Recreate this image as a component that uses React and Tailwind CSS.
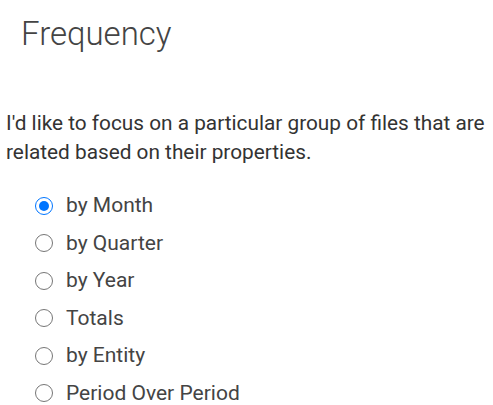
import React, { useState } from 'react';

const options = ['by Month', 'by Quarter', 'by Year', 'Totals', 'by Entity', 'Period Over Period'];

function Radio({ checked }) {
  return (
    <span
      className={`flex h-[18px] w-[18px] shrink-0 items-center justify-center rounded-full border-[1.5px] ${
        checked ? 'border-[#0075ff]' : 'border-[#767676]'
      }`}
    >
      {checked && <span className="h-[10px] w-[10px] rounded-full bg-[#0075ff]" />}
    </span>
  );
}

export default function App() {
  const [selected, setSelected] = useState('by Month');

  return (
    <div className="min-h-screen bg-white text-[#333] font-['Roboto',sans-serif]">
      <h1 className="pl-[21px] pt-[14px] text-[33px] font-light leading-[40px] text-[#444]">Frequency</h1>

      <p className="mt-[55px] pl-[6px] text-[20.8px] leading-[29px] text-[#333]">
        I'd like to focus on a particular group of files that are related based on their properties.
      </p>

      <div className="mt-[20px] flex flex-col pl-[35px]">
        {options.map((opt) => (
          <label
            key={opt}
            className="flex h-[37.5px] cursor-pointer items-center gap-[13px] text-[21px] text-[#444]"
            onClick={() => setSelected(opt)}
          >
            <Radio checked={selected === opt} />
            <span>{opt}</span>
          </label>
        ))}
      </div>
    </div>
  );
}
